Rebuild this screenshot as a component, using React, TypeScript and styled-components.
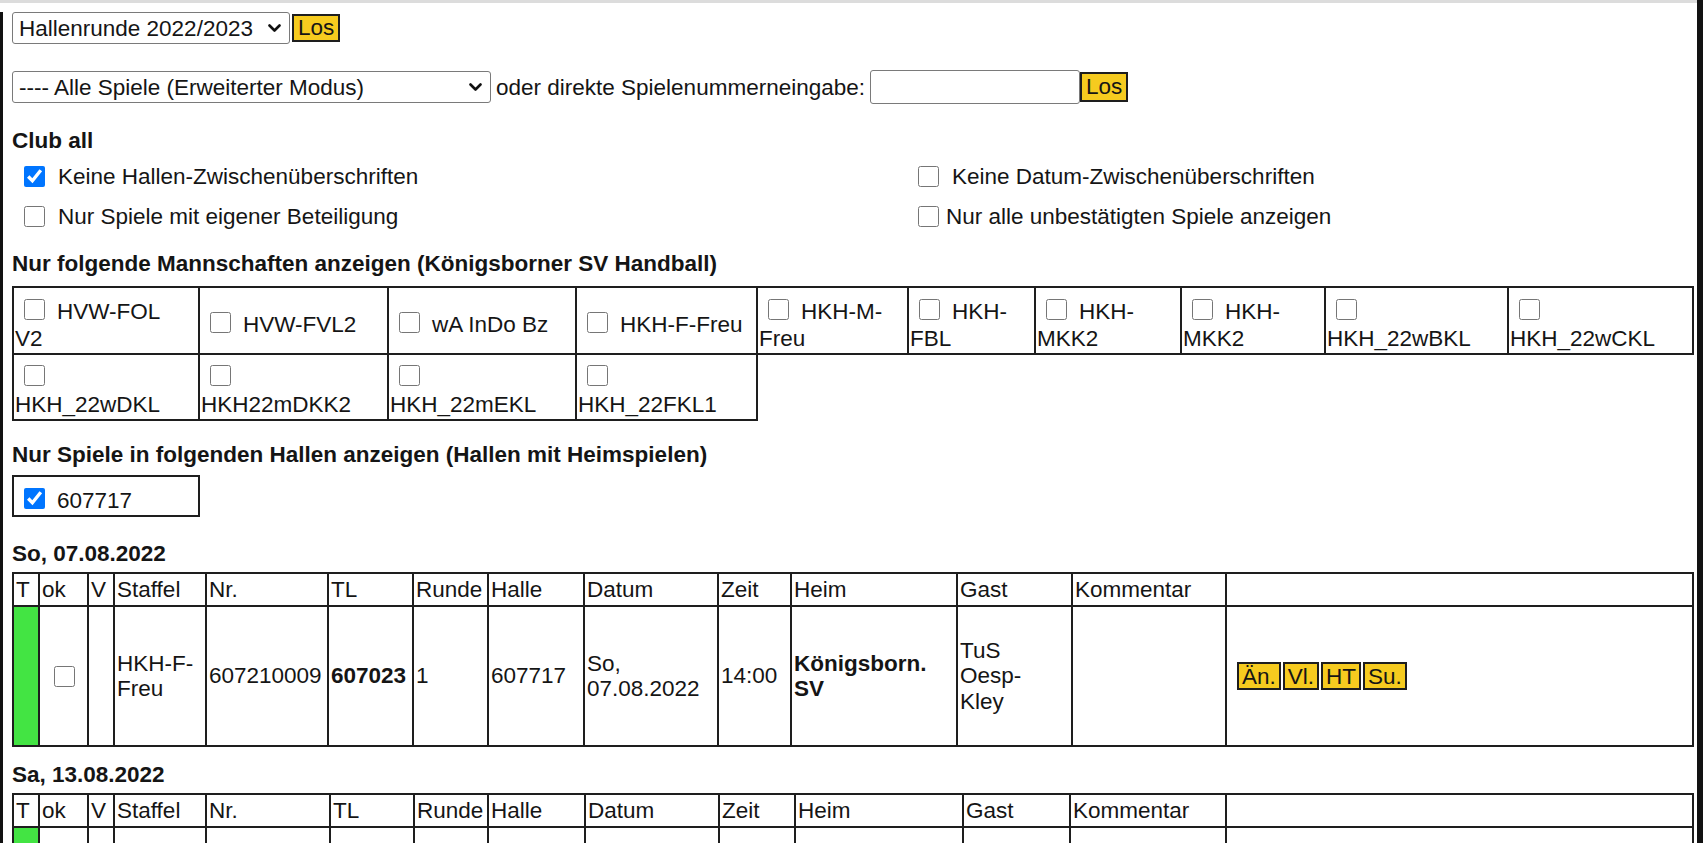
import React from "react";
import styled, { createGlobalStyle } from "styled-components";

const ink = "#1e1e1e";
const gold = "#f6cb1f";

const GlobalStyle = createGlobalStyle`
  *, *::before, *::after { box-sizing: border-box; }
  html, body { margin: 0; padding: 0; height: 100%; overflow: hidden; background: #fff; }
  body {
    font-family: "Liberation Sans", Arial, sans-serif;
    font-size: 22.5px;
    line-height: 25px;
    color: #151515;
  }
  #root { height: 100%; }
`;

/* window frame */
const Screen = styled.div`
  display: flex;
  height: 100vh;
  overflow: hidden;
`;

const Viewport = styled.div`
  flex: 1;
  min-width: 0;
  display: flex;
  flex-direction: column;
  border-top: 3px solid #dcdcdc;
`;

const Sheet = styled.main`
  flex: 1;
  margin-top: 9px;
  border-left: 3px solid #111;
  padding: 0 3px 0 9px;
`;

const EdgeRail = styled.div`
  width: 6px;
  flex: none;
  background: #111;
`;

/* form controls */
const FormRow = styled.div<{ $top: number; $h: number }>`
  display: flex;
  align-items: center;
  height: ${(p) => p.$h}px;
  margin-top: ${(p) => p.$top}px;
`;

const PickerWrap = styled.span<{ $w: number }>`
  position: relative;
  display: inline-flex;
  width: ${(p) => p.$w}px;
  height: 32px;
`;

const Picker = styled.select`
  appearance: none;
  width: 100%;
  height: 100%;
  font: inherit;
  font-size: 22.5px;
  color: #151515;
  background: #fff;
  border: 1px solid #7a7a7a;
  border-radius: 3px;
  padding: 0 30px 0 6px;
  outline: none;
`;

const Chevron = styled.svg`
  position: absolute;
  right: 9px;
  top: 12px;
  pointer-events: none;
`;

const GoButton = styled.button<{ $h: number; $gapLeft: number }>`
  font: inherit;
  font-size: 22.5px;
  line-height: 22px;
  height: ${(p) => p.$h}px;
  padding: 0 4px;
  margin-left: ${(p) => p.$gapLeft}px;
  background: ${gold};
  color: #151515;
  border: 2px solid ${ink};
  border-radius: 0;
`;

const InlineText = styled.span`
  margin: 0 5px;
  white-space: nowrap;
`;

const NumberField = styled.input`
  width: 210px;
  height: 34px;
  font: inherit;
  font-size: 22.5px;
  border: 1px solid #7a7a7a;
  border-radius: 3px;
  padding: 0 6px;
`;

/* headings */
const SectionTitle = styled.div<{ $top: number }>`
  font-weight: 700;
  margin-top: ${(p) => p.$top}px;
  white-space: nowrap;
`;

/* checkbox */
const Tick = styled.input.attrs({ type: "checkbox" })<{ $gap?: number; $lift?: number; $lead?: number }>`
  width: 21px;
  height: 21px;
  flex: none;
  margin: ${(p) => -(p.$lift ?? 0)}px ${(p) => p.$gap ?? 0}px 0 ${(p) => p.$lead ?? 0}px;
`;

/* option switches */
const OptionGrid = styled.div`
  display: grid;
  grid-template-columns: 906px 1fr;
  grid-auto-rows: 40px;
  margin-top: 3px;
`;

const Option = styled.label<{ $inset: number }>`
  display: flex;
  align-items: center;
  padding-left: ${(p) => p.$inset}px;
  white-space: nowrap;
`;

/* team picker */
const TeamGrid = styled.div`
  display: grid;
  grid-template-columns: 188px 189px 188px 181px 151px 127px 146px 144px 183px 185px;
  grid-template-rows: 69px 66px;
  margin-top: 10px;
  width: max-content;
`;

const TeamCell = styled.label<{ $lead: boolean; $head: boolean }>`
  display: flex;
  flex-direction: column;
  justify-content: center;
  padding: 8px 1px 0;
  border-right: 2px solid ${ink};
  border-bottom: 2px solid ${ink};
  border-left: ${(p) => (p.$lead ? `2px solid ${ink}` : "none")};
  border-top: ${(p) => (p.$head ? `2px solid ${ink}` : "none")};
  white-space: nowrap;
  overflow: hidden;
`;

const CellLine = styled.span`
  display: flex;
  align-items: center;
  height: 27px;
`;

const HallBox = styled.label`
  display: flex;
  flex-direction: column;
  justify-content: center;
  width: 188px;
  height: 42px;
  margin-top: 8px;
  padding: 8px 1px 0;
  border: 2px solid ${ink};
`;

/* game tables */
const GameGrid = styled.div<{ $cols: string }>`
  display: grid;
  grid-template-columns: ${(p) => p.$cols};
  grid-template-rows: 35px 140px;
  margin-top: 6px;
`;

const GameCell = styled.div<{
  $lead?: boolean;
  $head?: boolean;
  $fill?: string;
  $bold?: boolean;
  $center?: boolean;
  $inset?: number;
}>`
  display: flex;
  flex-direction: column;
  justify-content: center;
  align-items: ${(p) => (p.$center ? "center" : "flex-start")};
  padding: 0 1px 0 ${(p) => p.$inset ?? 2}px;
  border-right: 2px solid ${ink};
  border-bottom: 2px solid ${ink};
  border-left: ${(p) => (p.$lead ? `2px solid ${ink}` : "none")};
  border-top: ${(p) => (p.$head ? `2px solid ${ink}` : "none")};
  background: ${(p) => p.$fill ?? "transparent"};
  font-weight: ${(p) => (p.$bold ? 700 : 400)};
  white-space: nowrap;
  overflow: hidden;
`;

const TextLine = styled.span`
  display: block;
  line-height: 25.5px;
`;

const ActionBar = styled.div`
  display: flex;
  gap: 2px;
`;

const ActionButton = styled.button`
  font: inherit;
  font-size: 22.5px;
  line-height: 23px;
  height: 28px;
  padding: 0 3px;
  background: ${gold};
  color: #151515;
  border: 2px solid ${ink};
  border-radius: 0;
`;

const teams: string[][] = [
  ["HVW-FOL", "V2"],
  ["HVW-FVL2"],
  ["wA InDo Bz"],
  ["HKH-F-Freu"],
  ["HKH-M-", "Freu"],
  ["HKH-", "FBL"],
  ["HKH-", "MKK2"],
  ["HKH-", "MKK2"],
  ["", "HKH_22wBKL"],
  ["", "HKH_22wCKL"],
  ["", "HKH_22wDKL"],
  ["", "HKH22mDKK2"],
  ["", "HKH_22mEKL"],
  ["", "HKH_22FKL1"],
];

const headers = ["T", "ok", "V", "Staffel", "Nr.", "TL", "Runde", "Halle", "Datum", "Zeit", "Heim", "Gast", "Kommentar", ""];

const firstCols = "28px 49px 26px 92px 122px 85px 75px 96px 134px 73px 166px 115px 154px 467px";
const secondCols = "28px 49px 26px 92px 124px 84px 74px 97px 134px 76px 168px 107px 156px 467px";

type Game = {
  cells: (string[] | null)[];
};

const firstGame: Game = {
  cells: [
    ["HKH-F-", "Freu"],
    ["607210009"],
    ["607023"],
    ["1"],
    ["607717"],
    ["So,", "07.08.2022"],
    ["14:00"],
    ["Königsborn.", "SV"],
    ["TuS", "Oesp-", "Kley"],
    null,
  ],
};

const emptyGame: Game = { cells: [null, null, null, null, null, null, null, null, null, null] };

const DropArrow = () => (
  <Chevron width="13" height="9" viewBox="0 0 13 9">
    <path d="M1.5 1.5 L6.5 6.5 L11.5 1.5" fill="none" stroke="#111" strokeWidth="2.6" strokeLinecap="round" strokeLinejoin="round" />
  </Chevron>
);

function TeamPicker() {
  return (
    <TeamGrid>
      {teams.map((lines, i) => {
        const col = i < 10 ? i : i - 10;
        return (
          <TeamCell key={i} $lead={col === 0} $head={i < 10}>
            <CellLine>
              <Tick $lead={9} $lift={4} $gap={lines[0] ? 12 : 0} />
              {lines[0]}
            </CellLine>
            {lines.slice(1).map((l, j) => (
              <CellLine key={j}>{l}</CellLine>
            ))}
          </TeamCell>
        );
      })}
    </TeamGrid>
  );
}

function GameTable({ cols, game, showActions }: { cols: string; game: Game; showActions: boolean }) {
  const bold = new Set([2, 7]);
  return (
    <GameGrid $cols={cols}>
      {headers.map((h, i) => (
        <GameCell key={`h${i}`} $head $lead={i === 0}>
          {h}
        </GameCell>
      ))}
      <GameCell $lead $fill="#43e443" />
      <GameCell $center>
        <Tick />
      </GameCell>
      <GameCell />
      {game.cells.map((c, i) => (
        <GameCell key={`c${i}`} $bold={bold.has(i)}>
          {c?.map((l, j) => (
            <TextLine key={j}>{l}</TextLine>
          ))}
        </GameCell>
      ))}
      <GameCell $inset={10}>
        {showActions && (
          <ActionBar>
            <ActionButton>Än.</ActionButton>
            <ActionButton>Vl.</ActionButton>
            <ActionButton>HT</ActionButton>
            <ActionButton>Su.</ActionButton>
          </ActionBar>
        )}
      </GameCell>
    </GameGrid>
  );
}

export default function App() {
  return (
    <>
      <GlobalStyle />
      <Screen>
        <Viewport>
          <Sheet>
            <FormRow $top={0} $h={32}>
              <PickerWrap $w={278}>
                <Picker defaultValue="2022">
                  <option value="2022">Hallenrunde 2022/2023</option>
                </Picker>
                <DropArrow />
              </PickerWrap>
              <GoButton $h={28} $gapLeft={2}>Los</GoButton>
            </FormRow>

            <FormRow $top={26} $h={34}>
              <PickerWrap $w={479}>
                <Picker defaultValue="all">
                  <option value="all">---- Alle Spiele (Erweiterter Modus)</option>
                </Picker>
                <DropArrow />
              </PickerWrap>
              <InlineText>oder direkte Spielenummerneingabe:</InlineText>
              <NumberField type="text" />
              <GoButton $h={30} $gapLeft={0}>Los</GoButton>
            </FormRow>

            <SectionTitle $top={24}>Club all</SectionTitle>
            <OptionGrid>
              <Option $inset={12}>
                <Tick defaultChecked $gap={13} />
                Keine Hallen-Zwischenüberschriften
              </Option>
              <Option $inset={0}>
                <Tick $gap={13} />
                Keine Datum-Zwischenüberschriften
              </Option>
              <Option $inset={12}>
                <Tick $gap={13} />
                Nur Spiele mit eigener Beteiligung
              </Option>
              <Option $inset={0}>
                <Tick $gap={7} />
                Nur alle unbestätigten Spiele anzeigen
              </Option>
            </OptionGrid>

            <SectionTitle $top={15}>Nur folgende Mannschaften anzeigen (Königsborner SV Handball)</SectionTitle>
            <TeamPicker />

            <SectionTitle $top={21}>Nur Spiele in folgenden Hallen anzeigen (Hallen mit Heimspielen)</SectionTitle>
            <HallBox>
              <CellLine>
                <Tick defaultChecked $lead={9} $lift={4} $gap={12} />
                607717
              </CellLine>
            </HallBox>

            <SectionTitle $top={24}>So, 07.08.2022</SectionTitle>
            <GameTable cols={firstCols} game={firstGame} showActions />

            <SectionTitle $top={15}>Sa, 13.08.2022</SectionTitle>
            <GameTable cols={secondCols} game={emptyGame} showActions={false} />
          </Sheet>
        </Viewport>
        <EdgeRail />
      </Screen>
    </>
  );
}
